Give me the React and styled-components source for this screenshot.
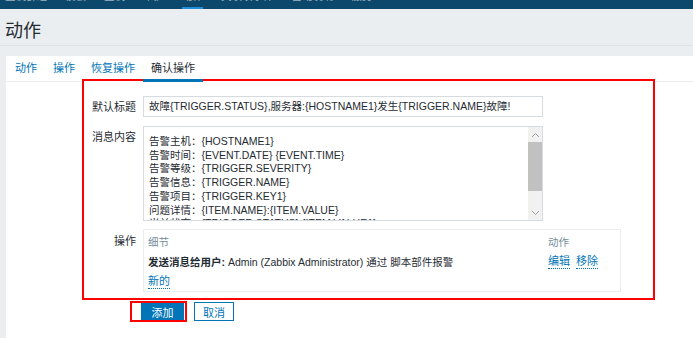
import React from 'react'
import styled, { createGlobalStyle } from 'styled-components';

const GlobalStyle = createGlobalStyle`
    html, body {
        margin: 0;
        padding: 0;
        background: #ebeef0;
        font-family: "Liberation Sans", "Noto Sans CJK SC", sans-serif;
        font-size: 10.5px;
        color: #1f2c33;
    }
`;

const navItems = ['主机群组', '模板', '主机', '维护', '动作', '关联项事件', '自动发现', '服务'];
const tabs = ['动作', '操作', '恢复操作', '确认操作'];
const messageLines = [
    '告警主机：{HOSTNAME1}',
    '告警时间：{EVENT.DATE} {EVENT.TIME}',
    '告警等级：{TRIGGER.SEVERITY}',
    '告警信息：{TRIGGER.NAME}',
    '告警项目：{TRIGGER.KEY1}',
    '问题详情：{ITEM.NAME}:{ITEM.VALUE}',
    '当前状态：{TRIGGER.STATUS}:{ITEM.VALUE1}',
    '事件ID：{EVENT.ID}',
];

function App() {
    return (
        <Page>
            <GlobalStyle />
            <TopNav>
                {navItems.map((item, i) => (
                    <NavItem key={item} $active={i === 4}><span>{item}</span></NavItem>
                ))}
            </TopNav>
            <Header>
                <Title>动作</Title>
            </Header>
            <Panel>
                <Tabs>
                    {tabs.map((t, i) => (
                        <Tab key={t} $active={i === 3}>{t}</Tab>
                    ))}
                </Tabs>
                <Annotated>
                    <FormGrid>
                        <Label $center>默认标题</Label>
                        <Input>故障{'{TRIGGER.STATUS}'},服务器:{'{HOSTNAME1}'}发生{'{TRIGGER.NAME}'}故障!</Input>

                        <Label $top={2}>消息内容</Label>
                        <TextArea>
                            <TextLines>
                                {messageLines.map(l => <div key={l}>{l}</div>)}
                            </TextLines>
                            <Scrollbar>
                                <ScrollArrow>
                                    <svg width="9" height="6" viewBox="0 0 9 6"><path d="M1 5 L4.5 1.5 L8 5" fill="none" stroke="#a0a0a0" strokeWidth="1"/></svg>
                                </ScrollArrow>
                                <ScrollTrack><ScrollThumb /></ScrollTrack>
                                <ScrollArrow>
                                    <svg width="9" height="6" viewBox="0 0 9 6"><path d="M1 1 L4.5 4.5 L8 1" fill="none" stroke="#a0a0a0" strokeWidth="1"/></svg>
                                </ScrollArrow>
                            </Scrollbar>
                        </TextArea>

                        <Label $top={3}>操作</Label>
                        <OpsBox>
                            <OpsRow>
                                <OpsHead>细节</OpsHead>
                                <OpsHead>动作</OpsHead>
                            </OpsRow>
                            <OpsRow $tall>
                                <div><b>发送消息给用户:</b> Admin (Zabbix Administrator) 通过 脚本部件报警</div>
                                <LinkGroup>
                                    <Link>编辑</Link>
                                    <Link>移除</Link>
                                </LinkGroup>
                            </OpsRow>
                            <OpsRow>
                                <LinkGroup><Link>新的</Link></LinkGroup>
                            </OpsRow>
                        </OpsBox>
                    </FormGrid>
                </Annotated>
                <ButtonRow>
                    <Highlight>
                        <PrimaryButton>添加</PrimaryButton>
                    </Highlight>
                    <SecondaryButton>取消</SecondaryButton>
                </ButtonRow>
            </Panel>
        </Page>
    )
}

export default App;

const Page = styled.div`
    min-height: 100vh;
    display: flex;
    flex-direction: column;
`;

const TopNav = styled.div`
    height: 9px;
    background: #0b486b;
    display: flex;
    padding-left: 5px;
    gap: 18px;
    overflow: hidden;
`;

const NavItem = styled.div`
    position: relative;
    height: 9px;
    overflow: hidden;
    color: #9fb4c2;
    > span {
        display: block;
        margin-top: -10px;
        line-height: 12px;
        white-space: nowrap;
    }
    &::after {
        content: '';
        position: absolute;
        left: 0;
        right: 0;
        bottom: 0;
        height: 2px;
        background: ${p => p.$active ? '#1f8ed6' : 'transparent'};
    }
`;

const Header = styled.div`
    height: 37px;
    border-bottom: 1px solid #dde2e5;
    margin-bottom: 10px;
    padding: 6px 0 0 5px;
    box-sizing: border-box;
`;

const Title = styled.h1`
    margin: 0;
    font-size: 18px;
    font-weight: normal;
    line-height: 33px;
    color: #1f2c33;
`;

const Panel = styled.div`
    flex: 1;
    margin-left: 6px;
    background: #fff;
`;

const Tabs = styled.div`
    display: flex;
    padding-left: 1px;
    border-bottom: 1px solid #ebeef0;
`;

const Tab = styled.div`
    position: relative;
    z-index: 2;
    height: 26px;
    margin-bottom: -1px;
    box-sizing: border-box;
    padding: 2px 8px 0;
    font-size: 11px;
    line-height: 21px;
    border-bottom: 3px solid ${p => p.$active ? '#0275b8' : 'transparent'};
    color: ${p => p.$active ? '#1f2c33' : '#0275b8'};
`;

const Annotated = styled.div`
    position: relative;
    z-index: 1;
    margin: -3px 0 0 76px;
    width: 573px;
    box-sizing: border-box;
    border: 2px solid #ff0000;
    background: #fff;
    padding: 15px 0 6px;
`;

const FormGrid = styled.div`
    display: grid;
    grid-template-columns: 52px 1fr;
    column-gap: 7px;
    row-gap: 9px;
`;

const Label = styled.div`
    text-align: right;
    font-size: 11px;
    line-height: 18px;
    padding-top: ${p => p.$top || 0}px;
    align-self: ${p => p.$center ? 'center' : 'start'};
`;

const Input = styled.div`
    width: 400px;
    height: 21px;
    box-sizing: border-box;
    border: 1px solid #d5dbdf;
    padding: 0 5px;
    line-height: 19px;
    white-space: nowrap;
    overflow: hidden;
`;

const TextArea = styled.div`
    width: 400px;
    height: 95px;
    box-sizing: border-box;
    border: 1px solid #d5dbdf;
    display: flex;
    margin-bottom: -1px;
    overflow: hidden;
`;

const TextLines = styled.div`
    flex: 1;
    padding: 8px 5px 0;
    line-height: 13.7px;
    overflow: hidden;
    white-space: nowrap;
`;

const Scrollbar = styled.div`
    width: 14px;
    display: flex;
    flex-direction: column;
    background: #f1f1f1;
`;

const ScrollArrow = styled.div`
    height: 15px;
    display: flex;
    align-items: center;
    justify-content: center;
`;

const ScrollTrack = styled.div`
    flex: 1;
`;

const ScrollThumb = styled.div`
    height: 49px;
    background: #c1c1c1;
`;

const OpsBox = styled.div`
    width: 478px;
    height: 63px;
    box-sizing: border-box;
    border: 1px solid #ebeef0;
    padding: 2px 0 2px 4px;
`;

const OpsRow = styled.div`
    display: grid;
    grid-template-columns: 400px 1fr;
    height: ${p => p.$tall ? 21 : 19}px;
    align-items: center;
    white-space: nowrap;
    b {
        font-weight: bold;
    }
`;

const OpsHead = styled.div`
    color: #768d99;
`;

const LinkGroup = styled.div`
    display: flex;
    gap: 6px;
`;

const Link = styled.span`
    color: #0275b8;
    border-bottom: 1px dotted #0275b8;
    line-height: 14px;
    font-size: 11px;
`;

const ButtonRow = styled.div`
    display: flex;
    align-items: center;
    margin: 1px 0 0 124px;
`;

const Highlight = styled.div`
    height: 21px;
    box-sizing: border-box;
    border: 2px solid #ff0000;
    padding: 0 1px 0 9px;
    display: flex;
`;

const PrimaryButton = styled.button`
    width: 43px;
    height: 17px;
    border: none;
    padding: 0;
    background: #0275b8;
    color: #fff;
    font: inherit;
    font-size: 11px;
`;

const SecondaryButton = styled.button`
    margin-left: 7px;
    width: 40px;
    height: 19px;
    box-sizing: border-box;
    border: 1px solid #0275b8;
    padding: 0;
    background: #fff;
    color: #0275b8;
    font: inherit;
    font-size: 11px;
`;
